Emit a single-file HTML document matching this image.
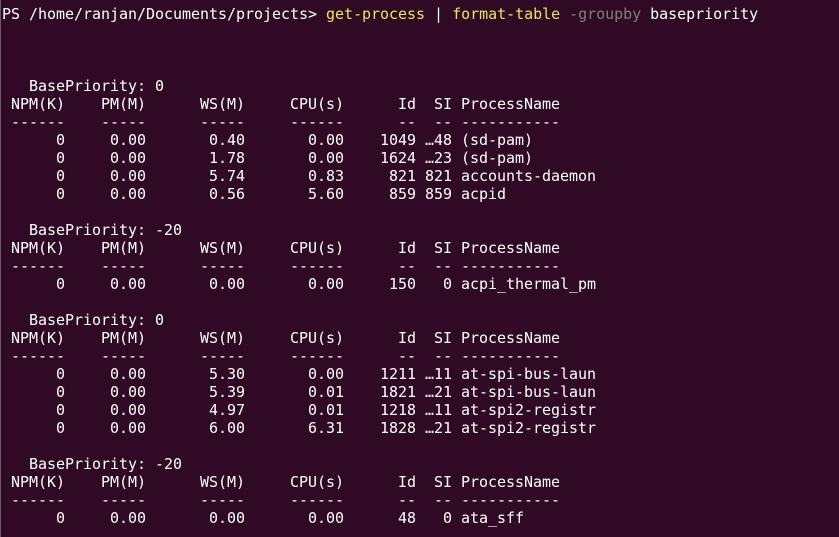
<!DOCTYPE html>
<html><head><meta charset="utf-8"><style>
html,body{margin:0;padding:0;width:839px;height:537px;overflow:hidden;background:#300a24;}
pre{margin:0;padding:5px 0 0 2px;font-family:"DejaVu Sans Mono","Liberation Mono",monospace;font-size:15px;line-height:18px;color:#ffffff;letter-spacing:-0.03px;}
.y{color:#e9e65a}.g{color:#7f7f7f}
.edge{position:absolute;left:0;top:0;width:1px;height:537px;background:#6b5a66}
</style></head><body><div class="edge"></div><pre>PS /home/ranjan/Documents/projects&gt; <span class="y">get-process</span> | <span class="y">format-table</span> <span class="g">-groupby</span> basepriority



   BasePriority: 0
 NPM(K)    PM(M)      WS(M)     CPU(s)      Id  SI ProcessName
 ------    -----      -----     ------      --  -- -----------
      0     0.00       0.40       0.00    1049 …48 (sd-pam)
      0     0.00       1.78       0.00    1624 …23 (sd-pam)
      0     0.00       5.74       0.83     821 821 accounts-daemon
      0     0.00       0.56       5.60     859 859 acpid

   BasePriority: -20
 NPM(K)    PM(M)      WS(M)     CPU(s)      Id  SI ProcessName
 ------    -----      -----     ------      --  -- -----------
      0     0.00       0.00       0.00     150   0 acpi_thermal_pm

   BasePriority: 0
 NPM(K)    PM(M)      WS(M)     CPU(s)      Id  SI ProcessName
 ------    -----      -----     ------      --  -- -----------
      0     0.00       5.30       0.00    1211 …11 at-spi-bus-laun
      0     0.00       5.39       0.01    1821 …21 at-spi-bus-laun
      0     0.00       4.97       0.01    1218 …11 at-spi2-registr
      0     0.00       6.00       6.31    1828 …21 at-spi2-registr

   BasePriority: -20
 NPM(K)    PM(M)      WS(M)     CPU(s)      Id  SI ProcessName
 ------    -----      -----     ------      --  -- -----------
      0     0.00       0.00       0.00      48   0 ata_sff
</pre></body></html>
